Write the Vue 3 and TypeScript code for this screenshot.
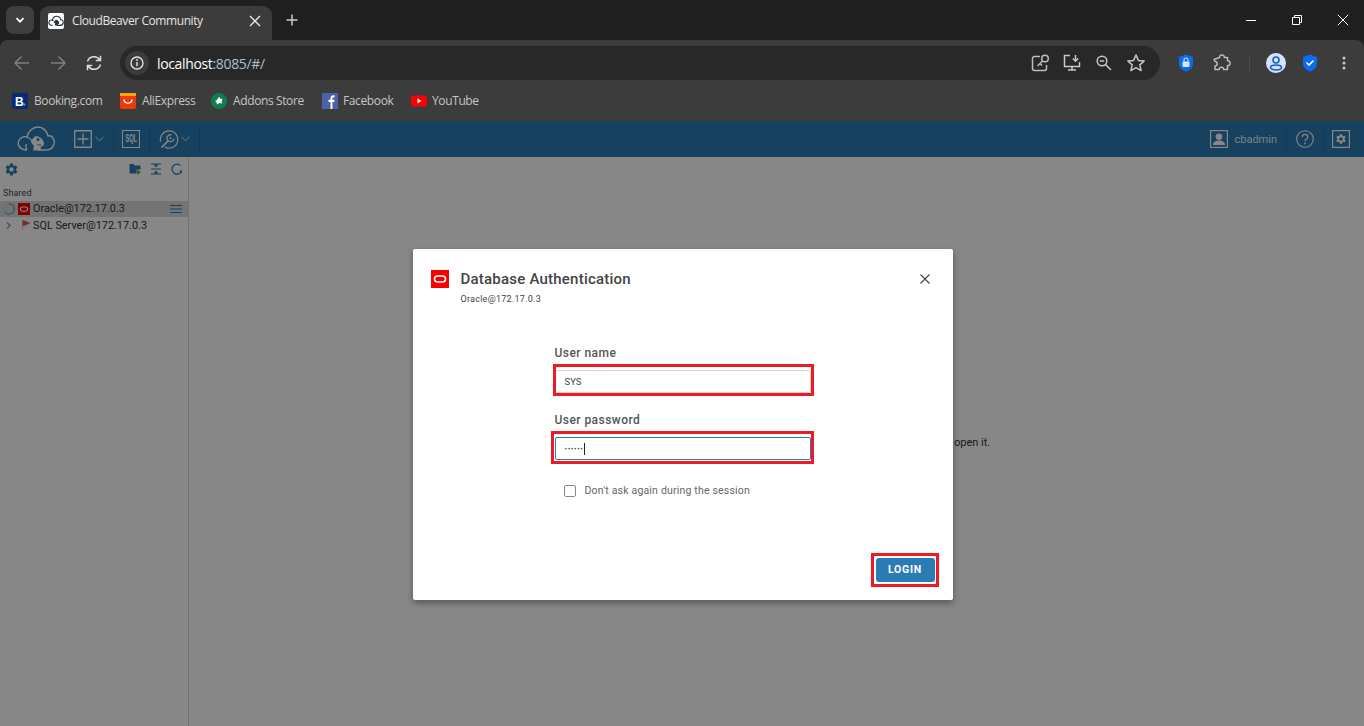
<script setup lang="ts">
const bookmarks = [
  { id: 'booking', label: 'Booking.com', width: 108 },
  { id: 'ali', label: 'AliExpress', width: 91 },
  { id: 'addons', label: 'Addons Store', width: 111 },
  { id: 'fb', label: 'Facebook', width: 89 },
  { id: 'yt', label: 'YouTube', width: 70 },
]
const gear =
  'M19.14 12.94c.04-.3.06-.61.06-.94 0-.32-.02-.64-.07-.94l2.03-1.58a.49.49 0 0 0 .12-.61l-1.92-3.32a.488.488 0 0 0-.59-.22l-2.39.96c-.5-.38-1.03-.7-1.62-.94l-.36-2.54a.484.484 0 0 0-.48-.41h-3.84c-.24 0-.43.17-.47.41l-.36 2.54c-.59.24-1.13.57-1.62.94l-2.39-.96c-.22-.08-.47 0-.59.22L2.74 8.87c-.12.21-.08.47.12.61l2.03 1.58c-.05.3-.09.63-.09.94s.02.64.07.94l-2.03 1.58a.49.49 0 0 0-.12.61l1.92 3.32c.12.22.37.29.59.22l2.39-.96c.5.38 1.03.7 1.62.94l.36 2.54c.05.24.24.41.48.41h3.84c.24 0 .44-.17.47-.41l.36-2.54c.59-.24 1.13-.56 1.62-.94l2.39.96c.22.08.47 0 .59-.22l1.92-3.32c.12-.22.07-.47-.12-.61l-2.01-1.58zM12 15.6c-1.98 0-3.6-1.62-3.6-3.6s1.62-3.6 3.6-3.6 3.6 1.62 3.6 3.6-1.62 3.6-3.6 3.6z'
const cloud =
  'M10 24C3.500 24 0 19.500 1.800 15 3.200 11 7 10 10 11 11 5 16 1 21 1c5 0 9 4 10 9 4-1 7 3 6 8-1 4-4 6-8 6h-8'
const beaver =
  'M16 24.500l1-5c-2-1-3.500-3-2.500-5.500l4-4c4 0 7.500 3 8.500 6.500.5 2.500-1 4-3 4l-.5 4z'
</script>

<template>
  <div class="screen">
    <!-- Tab strip -->
    <header class="tabstrip">
      <button class="tabsearch" aria-label="Search tabs">
        <svg width="12" height="12" viewBox="0 0 12 12"><path d="M2.500 4.200 6 7.700l3.500-3.500" fill="none" stroke="#fff" stroke-width="1.700" /></svg>
      </button>
      <div class="tab">
        <span class="favicon">
          <svg width="16" height="14" viewBox="-1 -1 40 28">
            <path :d="cloud" fill="none" stroke="#27343f" stroke-width="2.800" />
            <path :d="beaver" fill="#27343f" />
            <path d="M10 11c3 1 4.500 3 5 5" fill="none" stroke="#27343f" stroke-width="2.400" />
          </svg>
        </span>
        <span class="tabtitle">CloudBeaver Community</span>
        <svg class="tabclose" width="12" height="12" viewBox="0 0 12 12"><path d="M1 1l10 10M11 1 1 11" stroke="#e6e6e6" stroke-width="1.400" /></svg>
      </div>
      <svg class="newtab" width="12" height="12" viewBox="0 0 12 12"><path d="M6 .5v11M.5 6h11" stroke="#c8c8c8" stroke-width="1.500" /></svg>
      <div class="winctl">
        <svg width="12" height="12" viewBox="0 0 12 12"><path d="M1 6.500h10" stroke="#fff" /></svg>
        <svg width="12" height="12" viewBox="0 0 12 12"><path d="M1.500 3.500h7v7h-7zM3.500 3.500v-2h7v7h-2" fill="none" stroke="#fff" /></svg>
        <svg width="12" height="12" viewBox="0 0 12 12"><path d="M.8.800l10.400 10.400M11.200.800.800 11.200" stroke="#fff" /></svg>
      </div>
    </header>

    <!-- Address toolbar -->
    <nav class="toolbar">
      <div class="navbtns">
        <svg width="18" height="18" viewBox="0 0 18 18"><path d="M16 9H2.500M8.500 2.500 2 9l6.500 6.500" fill="none" stroke="#7d7d7d" stroke-width="1.500" /></svg>
        <svg width="18" height="18" viewBox="0 0 18 18"><path d="M2 9h13.500M9.500 2.500 16 9l-6.500 6.500" fill="none" stroke="#7d7d7d" stroke-width="1.500" /></svg>
        <svg width="18" height="18" viewBox="0 0 18 18"><path d="M2.500 7.500A6.800 6.800 0 0 1 14.800 6M15.500 10.500A6.800 6.800 0 0 1 3.200 12M15.500 1.800v4.700h-4.700M2.500 16.200v-4.700h4.700" fill="none" stroke="#dcdcdc" stroke-width="1.500" /></svg>
      </div>
      <div class="omnibox">
        <span class="infochip">
          <svg width="14" height="14" viewBox="0 0 14 14"><circle cx="7" cy="7" r="6" fill="none" stroke="#e6e6e6" stroke-width="1.300" /><path d="M7 6v4.200" stroke="#e6e6e6" stroke-width="1.400" /><circle cx="7" cy="4" r=".9" fill="#e6e6e6" /></svg>
        </span>
        <span class="url"><b>localhost</b>:8085/#/</span>
        <div class="omniicons">
          <svg width="20" height="20" viewBox="0 0 20 20"><path d="M10 3.500H4.500a2 2 0 0 0-2 2v10a2 2 0 0 0 2 2h10a2 2 0 0 0 2-2V12" fill="none" stroke="#bdbdbd" stroke-width="1.500" /><path d="m7.500 13 5-5M10.500 11l1.500 1.500" fill="none" stroke="#bdbdbd" stroke-width="1.500" /><circle cx="15" cy="5.500" r="3.300" fill="none" stroke="#bdbdbd" stroke-width="1.500" /></svg>
          <svg width="20" height="20" viewBox="0 0 20 20"><path d="M8 2.500H2.500v11h15V9M6 17h8M10 13.500V17" fill="none" stroke="#c8c8c8" stroke-width="1.500" /><path d="M13.500 2v6M10.800 5.500l2.700 2.700 2.700-2.700" fill="none" stroke="#c8c8c8" stroke-width="1.500" /></svg>
          <svg width="20" height="20" viewBox="-1 -1 20 20"><circle cx="7" cy="7" r="4.800" fill="none" stroke="#c8c8c8" stroke-width="1.500" /><path d="m10.500 10.500 5.500 5.500M4.800 7h4.400" stroke="#c8c8c8" stroke-width="1.500" /></svg>
          <svg width="20" height="20" viewBox="0 0 20 20"><path d="m10 2 2.400 5.400 5.800.6-4.400 3.900 1.300 5.700L10 14.600l-5.100 3 1.300-5.700L1.800 8l5.800-.6z" fill="none" stroke="#c8c8c8" stroke-width="1.500" stroke-linejoin="round" /></svg>
        </div>
      </div>
      <div class="exticons">
        <svg class="ext-lock" width="16" height="18" viewBox="0 0 16 18"><path d="M8 .5 15 3v6.500c0 4-3.200 6.800-7 8-3.800-1.200-7-4-7-8V3z" fill="#0b6cf0" /><rect x="4.500" y="7.500" width="7" height="5.500" rx="1" fill="#d5e6ff" /><path d="M6 7.500V6a2 2 0 0 1 4 0v1.500" fill="none" stroke="#d5e6ff" stroke-width="1.200" /></svg>
        <svg class="ext-puzzle" width="20" height="20" viewBox="0 0 20 20"><path d="M7.500 4.500c-.2-3.500 5-3.500 4.800 0h3.200v3.300c3.500-.2 3.500 5 0 4.800v3.900h-3.900c.2-3-4.500-3-4.300 0H3v-3.600c3 .2 3-4.600 0-4.400L2 6.500z" fill="none" stroke="#bdbdbd" stroke-width="1.500" stroke-linejoin="round" /></svg>
        <span class="sep"></span>
        <span class="avatar">
          <svg width="14" height="16" viewBox="0 0 14 16"><circle cx="7" cy="5" r="3" fill="none" stroke="#1a5fc4" stroke-width="1.600" /><ellipse cx="7" cy="12.500" rx="5.500" ry="2.500" fill="none" stroke="#1a5fc4" stroke-width="1.600" /></svg>
        </span>
        <svg class="ext-check" width="16" height="18" viewBox="0 0 16 18"><path d="M8 .5 15 3v6.500c0 4-3.200 6.800-7 8-3.800-1.200-7-4-7-8V3z" fill="#0b6cf0" /><path d="m4.500 8.500 2.500 2.500 4.500-4.500" fill="none" stroke="#fff" stroke-width="1.600" /></svg>
        <svg class="ext-dots" width="4" height="14" viewBox="0 0 4 14"><circle cx="2" cy="2" r="1.500" fill="#c8c8c8" /><circle cx="2" cy="7" r="1.500" fill="#c8c8c8" /><circle cx="2" cy="12" r="1.500" fill="#c8c8c8" /></svg>
      </div>
    </nav>

    <!-- Bookmarks -->
    <div class="bookmarks">
      <div v-for="b in bookmarks" :key="b.id" class="bookmark" :style="{ width: b.width + 'px' }">
        <svg v-if="b.id === 'booking'" width="16" height="16" viewBox="0 0 16 16"><rect width="16" height="16" rx="2" fill="#0b2a75" /><text x="3" y="12.500" class="bk-b">B</text><circle cx="12" cy="11.500" r="1.300" fill="#2aa7e8" /></svg>
        <svg v-else-if="b.id === 'ali'" width="16" height="16" viewBox="0 0 16 16"><rect width="16" height="16" rx="2" fill="#ee3a06" /><rect width="16" height="3" fill="#f7a31b" /><path d="M4 6.500c.5 5 7.500 5 8 0" fill="none" stroke="#fff" stroke-width="1.400" /></svg>
        <svg v-else-if="b.id === 'addons'" width="16" height="16" viewBox="0 0 16 16"><circle cx="8" cy="8" r="8" fill="#0f7d4f" /><path d="M8 3.800 9.200 5.800l2.300.2-.9 2.200.4 2.300-2.500-.4L6 11.500l-.6-2.600-1.400-1 2-.9z" fill="#fff" /></svg>
        <svg v-else-if="b.id === 'fb'" width="16" height="16" viewBox="0 0 16 16"><rect width="16" height="16" fill="#4a63a8" /><path d="M8.500 16V9H6.500V6.800h2V5.200C8.500 3 10 2 12.500 2.300v2.100h-1.300c-.6 0-.8.400-.8.900v1.500h2.100L12.200 9h-1.800v7z" fill="#fff" /></svg>
        <svg v-else width="16" height="16" viewBox="0 0 16 16"><rect y="2.500" width="16" height="11" rx="3" fill="#f00" /><path d="M6.500 5.500v5L10.500 8z" fill="#fff" /></svg>
        <span class="bmlabel">{{ b.label }}</span>
      </div>
    </div>

    <!-- Page -->
    <main class="page">
      <div class="appbar">
        <svg class="logo" width="38" height="26" viewBox="0 0 38 26">
          <path :d="cloud" fill="none" stroke="#fff" stroke-width="1.400" />
          <path :d="beaver" fill="#fff" />
          <path d="M10 11c3 1 4.500 3 5 5M10 24c-1.500-2-1.500-4-.5-6" fill="none" stroke="#fff" stroke-width="1.200" />
          <circle cx="21" cy="13.500" r="1.500" fill="#2a7cb4" />
          <path d="M24 18.500c-1.500 1-3 .5-4-.5" fill="none" stroke="#2a7cb4" />
        </svg>
        <span class="app-plus">
          <svg width="18" height="18" viewBox="0 0 18 18"><path d="M.75.750h16.500v16.500H.75zM9 3.500v11M3.500 9h11" fill="none" stroke="#fff" stroke-width="1.300" /></svg>
          <svg class="chev" width="9" height="6" viewBox="0 0 9 6"><path d="m.5.800 4 4 4-4" fill="none" stroke="#fff" /></svg>
        </span>
        <span class="vsep"></span>
        <span class="sqlbox"><span>SQL</span></span>
        <span class="vsep"></span>
        <span class="app-tool">
          <svg width="20" height="19" viewBox="0 0 20 19">
            <path d="M1.600 11.500A8.700 8.700 0 1 1 5.800 17.100" fill="none" stroke="#fff" stroke-width="1.200" />
            <path d="M2.500 17.500 9 11" fill="none" stroke="#fff" stroke-width="1.700" />
            <path d="M13 5a3.500 3.500 0 1 0 2 3.500" fill="none" stroke="#fff" stroke-width="1.300" />
            <path d="m10.800 7.500 1.500 1.500" stroke="#fff" stroke-width="1.300" />
          </svg>
          <svg class="chev" width="9" height="6" viewBox="0 0 9 6"><path d="m.5.800 4 4 4-4" fill="none" stroke="#fff" /></svg>
        </span>
        <span class="vsep"></span>
        <div class="appright">
          <svg width="18" height="18" viewBox="0 0 18 18"><rect x=".6" y=".6" width="16.800" height="16.800" fill="none" stroke="#fff" stroke-width="1.200" /><circle cx="9" cy="6.800" r="3.300" fill="#fff" /><path d="M3 15c0-3.500 3-4.500 6-4.500s6 1 6 4.500z" fill="#fff" /></svg>
          <span class="username">cbadmin</span>
          <span class="vsep"></span>
          <svg width="18" height="18" viewBox="0 0 18 18"><circle cx="9" cy="9" r="8.300" fill="none" stroke="#fff" stroke-width="1.100" /><path d="M6.300 7c0-3.400 5.500-3.400 5.500 0 0 2-2.800 2-2.800 4.300" fill="none" stroke="#fff" stroke-width="1.200" /><circle cx="9" cy="13.500" r=".9" fill="#fff" /></svg>
          <span class="vsep"></span>
          <svg width="18" height="18" viewBox="0 0 18 18"><rect x=".6" y=".6" width="16.800" height="16.800" fill="none" stroke="#fff" stroke-width="1.200" /><g transform="translate(3 3) scale(.5)"><path :d="gear" fill="#fff" /></g></svg>
        </div>
      </div>

      <div class="workspace">
        <aside class="sidebar">
          <div class="sidetools">
            <svg class="gear" width="13" height="13" viewBox="1.500 1.500 21 21"><path :d="gear" fill="#2a7cb4" /></svg>
            <div class="sidetools-r">
              <svg width="12" height="12" viewBox="0 0 12 12"><path d="M.5 1h4l1.200 1.500h5.800V6.500H7.500V10.500H.5z" fill="#2a7cb4" /><path d="M9.200 7v4.500M7 9.200h4.500" stroke="#46b046" stroke-width="1.600" /></svg>
              <svg width="12" height="12" viewBox="0 0 12 12"><path d="M1 1h10M1 11h10M1 6h10" stroke="#2a7cb4" /><path d="M3.500 1.500 6 4.500l2.500-3zM3.500 10.500 6 7.500l2.500 3z" fill="#2a7cb4" /></svg>
              <svg width="12" height="12" viewBox="0 0 12 12"><path d="M10.500 8.500A5 5 0 1 1 9.500 2.500" fill="none" stroke="#2a7cb4" stroke-width="1.300" /><path d="M11.500 7.500h-3l1.500 3z" fill="#2a7cb4" /></svg>
            </div>
          </div>
          <div class="shared">Shared</div>
          <div class="treerow selected">
            <svg class="spin" width="12" height="12" viewBox="0 0 12 12"><path d="M6 .8A5.200 5.200 0 1 1 2 9.300" fill="none" stroke="#6fa8d0" stroke-width="1.400" /><path d="M2 9.300A5.200 5.200 0 0 1 6 .8" fill="none" stroke="#d0d0d0" stroke-width="1.400" /></svg>
            <svg class="dbicon" width="12" height="12" viewBox="0 0 12 12"><rect width="12" height="12" fill="#f80000" /><rect x="2.500" y="4" width="7" height="4.200" rx="2.100" fill="none" stroke="#fff" stroke-width="1.100" /></svg>
            <span class="treelabel">Oracle@172.17.0.3</span>
            <svg class="rowmenu" width="12" height="8" viewBox="0 0 12 8"><path d="M0 .5h12M0 4h12M0 7.500h12" stroke="#2a7cb4" /></svg>
          </div>
          <div class="treerow">
            <svg class="caret" width="6" height="7" viewBox="0 0 6 7"><path d="m1 .5 3 3-3 3" fill="none" stroke="#333" /></svg>
            <svg class="flag" width="11" height="12" viewBox="0 0 11 12"><path d="M2.500 1v10" stroke="#c9c9c9" /><path d="M2.500 1l8 3-5 2.500-3 0z" fill="#e0525a" /><path d="M1 11.500 5 7" stroke="#d8d8d8" /></svg>
            <span class="treelabel">SQL Server@172.17.0.3</span>
          </div>
        </aside>
        <section class="empty">
          <p>open it.</p>
        </section>
      </div>

      <!-- Dialog -->
      <div class="backdrop">
        <div class="dialog">
          <div class="dlghead">
            <svg class="dlgicon" width="18" height="18" viewBox="0 0 18 18"><rect width="18" height="18" fill="#f80000" /><rect x="3.500" y="6" width="11" height="6" rx="3" fill="none" stroke="#fff" stroke-width="1.500" /></svg>
            <div class="dlgtitles">
              <h1>Database Authentication</h1>
              <p>Oracle@172.17.0.3</p>
            </div>
            <svg class="dlgclose" width="10" height="10" viewBox="0 0 10 10"><path d="m.5.500 9 9M9.500.500l-9 9" stroke="#444" stroke-width="1.100" /></svg>
          </div>
          <form class="dlgform" @submit.prevent>
            <label class="field">
              <span class="fieldlabel">User name</span>
              <span class="inputwrap user">
                <span class="input">SYS</span>
              </span>
            </label>
            <label class="field second">
              <span class="fieldlabel">User password</span>
              <span class="inputwrap pass">
                <span class="input focused"><span class="dots">······</span><span class="caretbar"></span></span>
              </span>
            </label>
            <label class="check">
              <span class="box"></span>
              <span>Don't ask again during the session</span>
            </label>
          </form>
          <div class="dlgfoot">
            <span class="btnwrap"><button type="button" class="login">LOGIN</button></span>
          </div>
        </div>
      </div>
    </main>
  </div>
</template>

<style>
html, body { margin: 0; padding: 0; background: #fff; overflow: hidden; }
</style>

<style scoped>
.screen {
  width: 1364px;
  height: 726px;
  display: flex;
  flex-direction: column;
  overflow: hidden;
  background: #202020;
  font-family: Roboto, "Liberation Sans", sans-serif;
}

.tabstrip {
  height: 40px;
  flex: none;
  display: flex;
  align-items: flex-end;
  background: #202020;
  padding-left: 6px;
  box-sizing: border-box;
}
.tabsearch {
  width: 28px;
  height: 28px;
  margin-bottom: 6px;
  border: 0;
  padding: 0;
  border-radius: 8px;
  background: #3f3f3f;
  display: flex;
  align-items: center;
  justify-content: center;
}
.tab {
  width: 232px;
  height: 34px;
  margin-left: 6px;
  background: #3c3c3c;
  border-radius: 9px 9px 0 0;
  display: flex;
  align-items: center;
  box-sizing: border-box;
  padding: 0 11px 5px 8px;
}
.favicon {
  width: 16px;
  height: 16px;
  background: #fff;
  border-radius: 2px;
  flex: none;
  display: flex;
  align-items: center;
}
.tabtitle {
  flex: 1;
  margin-left: 8px;
  color: #e4e4e4;
  font: 12px "Open Sans", sans-serif;
  letter-spacing: -0.42px;
  white-space: nowrap;
}
.newtab { margin: 0 0 14px 14px; }
.winctl {
  margin-left: auto;
  width: 119px;
  height: 40px;
  display: flex;
  align-items: center;
  justify-content: space-between;
  padding-right: 15px;
  box-sizing: border-box;
}

.toolbar {
  height: 41px;
  flex: none;
  background: #3c3c3c;
  border-radius: 8px 8px 0 0;
  display: flex;
  align-items: center;
  box-sizing: border-box;
  padding: 5px 0 0 13px;
}
.navbtns {
  display: flex;
  gap: 18px;
  width: 107px;
  flex: none;
}
.omnibox {
  width: 1040px;
  height: 34px;
  flex: none;
  border-radius: 17px;
  background: #282828;
  display: flex;
  align-items: center;
  box-sizing: border-box;
  padding: 0 14px 0 5px;
}
.infochip {
  width: 24px;
  height: 24px;
  border-radius: 50%;
  background: #3c3c3c;
  display: flex;
  align-items: center;
  justify-content: center;
  flex: none;
}
.url {
  margin-left: 8px;
  color: #a8c0d0;
  font: 14px "Open Sans", sans-serif;
  letter-spacing: -0.35px;
}
.url b { font-weight: 400; color: #fff; }
.omniicons {
  margin-left: auto;
  display: flex;
  align-items: center;
  gap: 12px;
}
.exticons {
  display: flex;
  align-items: center;
  flex: 1;
  height: 100%;
}
.ext-lock { margin-left: 18px; }
.ext-puzzle { margin-left: 18px; }
.sep { width: 1px; height: 16px; background: #4c4c4c; margin-left: 17px; }
.avatar {
  width: 20px;
  height: 20px;
  border-radius: 50%;
  background: #d3e3fd;
  margin-left: 16px;
  display: flex;
  align-items: center;
  justify-content: center;
}
.ext-check { margin-left: 16px; }
.ext-dots { margin-left: 24px; }

.bookmarks {
  height: 39px;
  flex: none;
  background: #3c3c3c;
  display: flex;
  align-items: center;
  padding-left: 12px;
  box-sizing: border-box;
}
.bookmark {
  display: flex;
  align-items: center;
  flex: none;
  gap: 6px;
}
.bookmark:nth-child(n + 4) { gap: 5px; }
.bk-b { font: 700 12px "Liberation Sans", sans-serif; fill: #fff; }
.bmlabel {
  color: #c6c6c6;
  font: 12px "Open Sans", sans-serif;
  letter-spacing: -0.38px;
  white-space: nowrap;
  margin-top: -1px;
}

.page {
  flex: 1;
  position: relative;
  display: flex;
  flex-direction: column;
  min-height: 0;
  background: #fff;
}
.appbar {
  height: 37px;
  flex: none;
  border-top: 1px solid #3c3c3c;
  box-sizing: border-box;
  background: #2a7cb4;
  display: flex;
  align-items: center;
  padding-left: 17px;
}
.logo { flex: none; }
.app-plus { display: flex; align-items: center; gap: 3px; margin-left: 19px; }
.chev { opacity: .85; }
.vsep { width: 1px; height: 26px; background: #256c9d; flex: none; }
.app-plus + .vsep { margin-left: 9px; }
.sqlbox {
  width: 18px;
  height: 18px;
  margin-left: 8px;
  border: 1.200px solid #fff;
  box-sizing: border-box;
  color: #fff;
  font: 700 10px/16px "Liberation Sans", sans-serif;
  display: flex;
  justify-content: center;
  overflow: hidden;
}
.sqlbox span { display: block; transform: scaleX(.56); }
.sqlbox + .vsep { margin-left: 9px; }
.app-tool { display: flex; align-items: center; gap: 2px; margin-left: 9px; }
.app-tool + .vsep { margin-left: 9px; }
.appright {
  margin-left: auto;
  display: flex;
  align-items: center;
  padding-right: 14px;
}
.username {
  color: #fff;
  font-size: 11px;
  margin: 0 9px 0 6px;
  opacity: .9;
}
.appright svg:nth-of-type(2) { margin: 0 9px; }
.appright svg:nth-of-type(3) { margin-left: 8px; }

.workspace {
  flex: 1;
  display: flex;
  min-height: 0;
}
.sidebar {
  width: 189px;
  flex: none;
  box-sizing: border-box;
  background: #fff;
  border-right: 1px solid #d8d8d8;
  display: flex;
  flex-direction: column;
}
.sidetools {
  height: 24px;
  display: flex;
  align-items: center;
  padding: 0 5px;
}
.sidetools-r {
  margin-left: auto;
  display: flex;
  gap: 9px;
}
.shared {
  color: #4a4a4a;
  font-size: 9px;
  line-height: 11px;
  letter-spacing: 0.1px;
  margin: 7px 0 2px 3px;
}
.treerow {
  height: 16px;
  display: flex;
  align-items: center;
  padding-left: 3px;
  color: #333;
  font-size: 10.850px;
}
.treerow.selected { background: #dcdcdc; }
.selected .treelabel { margin-top: -1px; }
.dbicon { margin-left: 3px; }
.treelabel { margin-left: 3px; white-space: nowrap; }
.rowmenu { margin-left: auto; margin-right: 6px; }
.caret { margin-left: 3px; }
.flag { margin-left: 8px; }
.flag + .treelabel { margin-left: 2px; }

.empty {
  flex: 1;
  display: flex;
  align-items: center;
  background: #fff;
  color: #333;
  font-size: 11px;
  padding: 2px 0 0 765px;
}
.empty p { margin: 0; white-space: nowrap; }

.backdrop {
  position: absolute;
  inset: 1px 0 0;
  background: rgba(0, 0, 0, 0.47);
  display: flex;
  justify-content: center;
  align-items: flex-start;
  padding: 128px 0 0 1px;
  box-sizing: border-box;
}
.dialog {
  width: 540px;
  height: 351px;
  background: #fff;
  border-radius: 2px;
  box-shadow: 0 3px 6px rgba(0, 0, 0, 0.35);
  display: flex;
  flex-direction: column;
  box-sizing: border-box;
  color: #444;
}
.dlghead {
  display: flex;
  align-items: flex-start;
  padding: 21px 23px 0 18px;
  height: 97px;
  box-sizing: border-box;
}
.dlgicon { flex: none; }
.dlgtitles { margin-left: 12px; }
.dlgtitles h1 {
  margin: 0;
  font-size: 15px;
  font-weight: 500;
  line-height: 18px;
  letter-spacing: 0.22px;
  color: #444;
}
.dlgtitles p {
  margin: 6px 0 0;
  font-size: 9px;
  line-height: 11px;
  color: #444;
  letter-spacing: 0.25px;
}
.dlgclose { margin-left: auto; margin-top: 4px; }
.dlgform {
  flex: 1;
  display: flex;
  flex-direction: column;
  padding-left: 142px;
  width: 398px;
  box-sizing: border-box;
}
.field { display: block; width: 256px; }
.field.second { margin-top: 20px; }
.fieldlabel {
  display: block;
  font-size: 12px;
  font-weight: 500;
  line-height: 15px;
  letter-spacing: 0.45px;
  color: #555;
  margin-bottom: 9px;
}
.inputwrap {
  display: block;
  position: relative;
}
.inputwrap::after {
  content: "";
  position: absolute;
  border: 3px solid #ed1c24;
  pointer-events: none;
}
.inputwrap.user::after { inset: -6px -3px -3px -2px; }
.inputwrap.pass::after { inset: -6px -3px -4px -4px; }
.input {
  display: block;
  height: 23px;
  box-sizing: border-box;
  border: 1px solid #d2d2d2;
  border-radius: 2px;
  padding-left: 9px;
  font-size: 9.500px;
  line-height: 21px;
  color: #444;
}
.input.focused { border-color: #2a7cb4; display: flex; align-items: center; }
.dots { font: 700 9.500px/21px "Liberation Sans", sans-serif; color: #444; }
.caretbar { width: 1px; height: 12px; background: #222; margin-left: 1px; }
.check {
  display: flex;
  align-items: center;
  gap: 9px;
  margin: 24px 0 0 9px;
  font-size: 10.500px;
  color: #666;
  letter-spacing: 0.19px;
}
.box {
  width: 12px;
  height: 12px;
  border: 1px solid #888;
  border-radius: 2px;
  box-sizing: border-box;
}
.dlgfoot {
  display: flex;
  justify-content: flex-end;
  padding: 0 18px 18px 0;
}
.btnwrap { position: relative; display: block; height: 24px; }
.btnwrap::after {
  content: "";
  position: absolute;
  inset: -5px -4px -5px -5px;
  border: 3px solid #ed1c24;
  pointer-events: none;
}
.login {
  display: block;
  width: 59px;
  height: 24px;
  border: 0;
  border-radius: 3px;
  background: #2a7cb4;
  color: #fff;
  font: 700 10.500px Roboto, sans-serif;
  letter-spacing: 0.75px;
  padding: 0 0 2px;
}
</style>
